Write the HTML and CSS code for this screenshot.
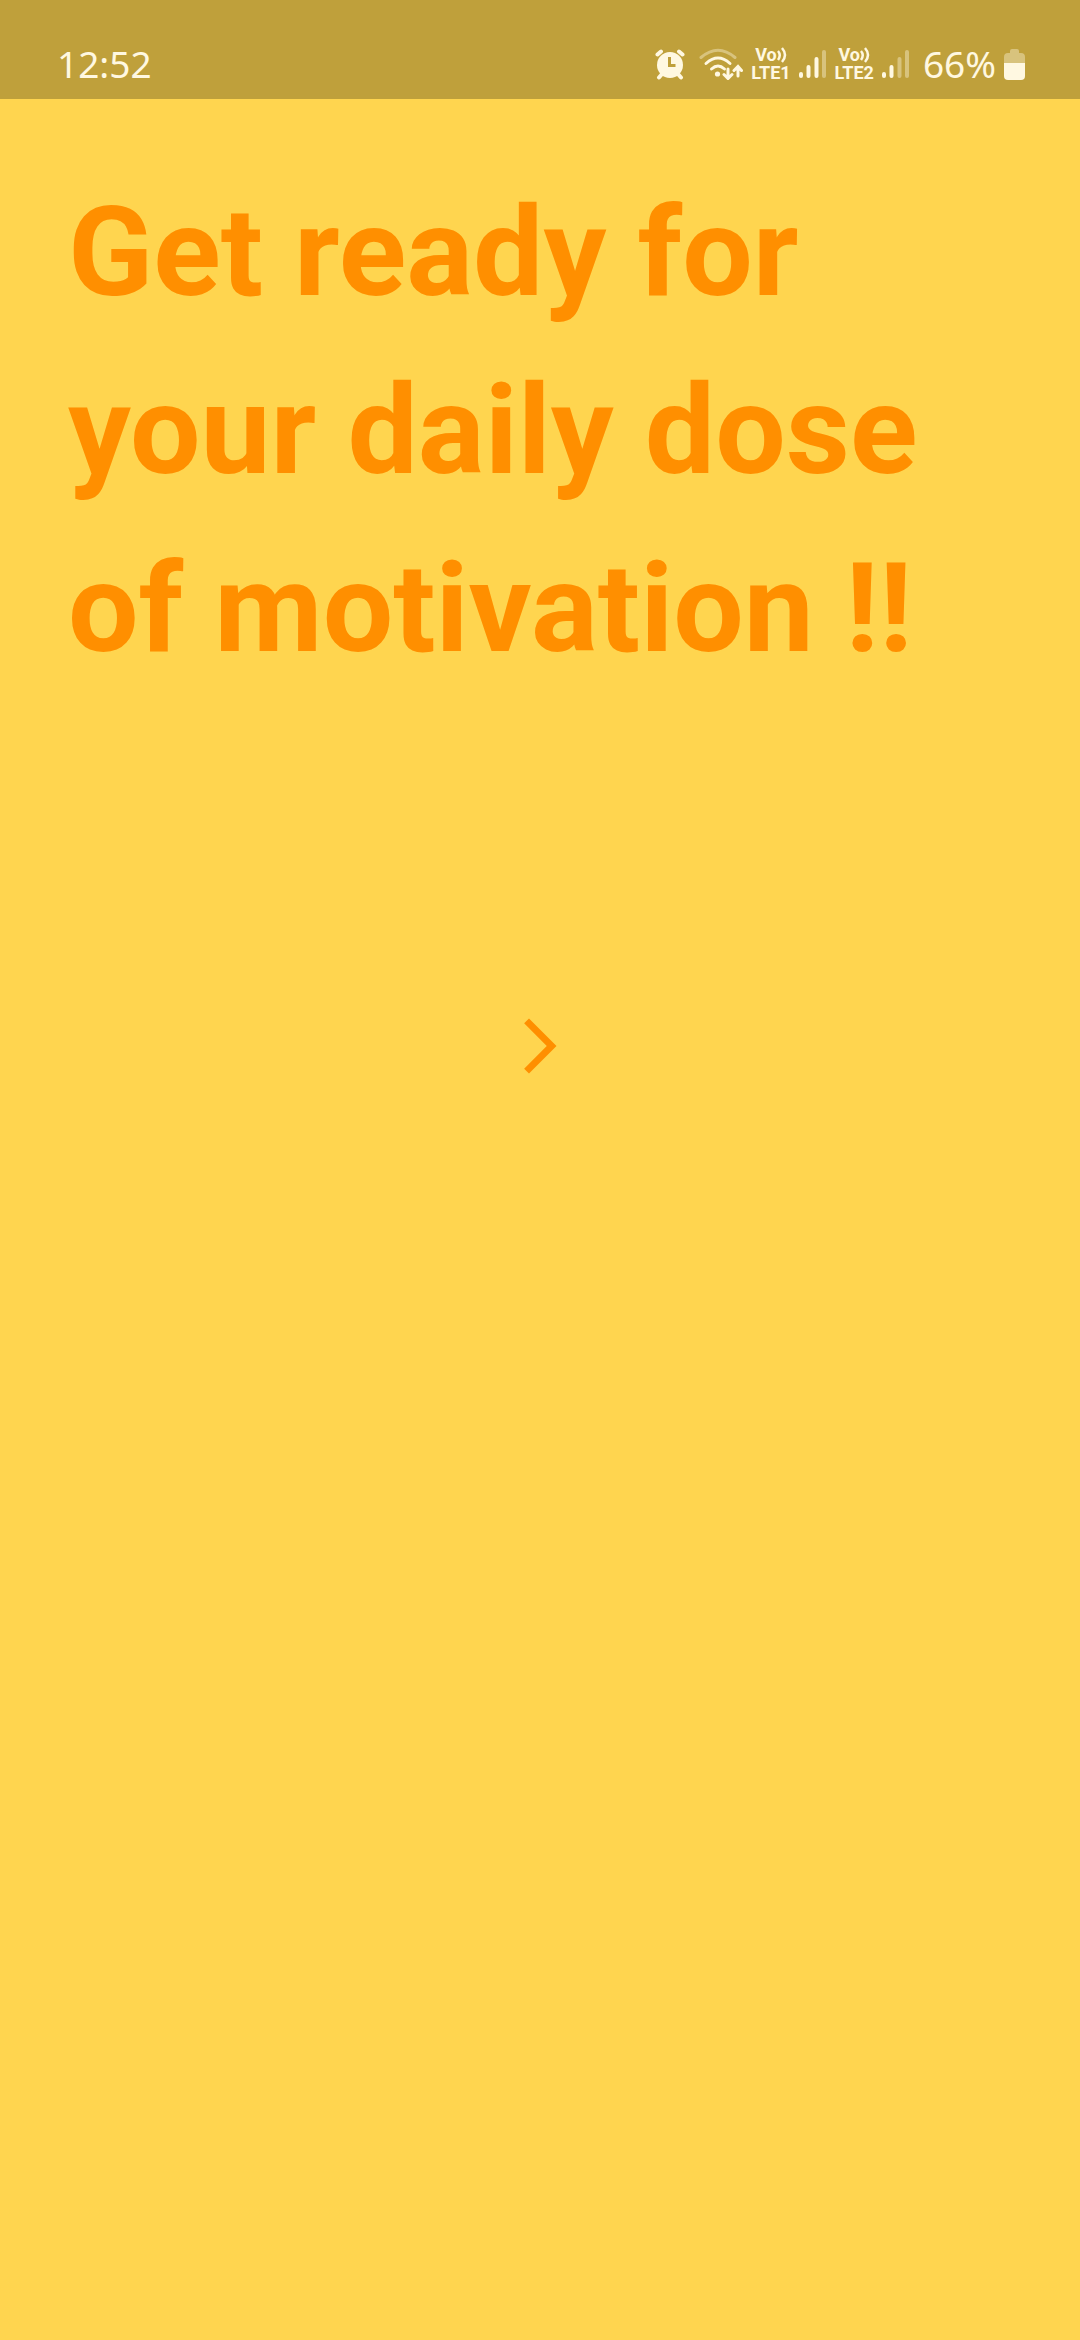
FILE: index.html
```html
<!DOCTYPE html>
<html lang="en">
<head>
<meta charset="utf-8">
<meta name="viewport" content="width=device-width, initial-scale=1">
<title>Daily motivation</title>
<link rel="stylesheet" href="styles.css">
</head>
<body>
<header class="status">
  <time class="clock">12:52</time>
  <div class="indicators">
    <svg class="alarm" width="30" height="32" viewBox="0 0 30 32" aria-label="Alarm">
      <g stroke="currentColor" stroke-width="4" stroke-linecap="round" fill="none">
        <path d="M2.5 6.5L6 3.5M27.5 6.5L24 3.5M7 26L4 29.500M23 26L26 29.500"/>
      </g>
      <circle cx="15" cy="17" r="13" fill="currentColor"/>
      <path class="hands" d="M14.500 9V17.500H20.500"/>
    </svg>
    <svg class="wifi" width="44" height="32" viewBox="0 0 44 32" aria-label="Wi-Fi">
      <g stroke="currentColor" stroke-width="3" stroke-linecap="round" fill="none">
        <path d="M2 9.500Q19 -5 36 9.500" opacity=".4"/>
        <path d="M7 15.500Q19 4.500 31 15.500"/>
        <path d="M12.500 21Q19 15 25.500 21"/>
        <path d="M29 21V30M25 26.500L29 30.500L33 26.500M39 28V18.500M35 22.500L39 18.500L42.500 22.500"/>
      </g>
      <circle cx="18.500" cy="26" r="2.600" fill="currentColor"/>
    </svg>
    <div class="volte"><span class="vo">Vo<svg width="10" height="18" viewBox="0 0 10 18" aria-hidden="true"><path d="M1 5Q4.500 9 1 14M5 2Q11 9 5 16" fill="none" stroke="currentColor" stroke-width="2.500"/></svg></span><span>LTE1</span></div>
    <svg class="signal" width="28" height="32" viewBox="0 0 28 32" aria-label="Signal 1">
      <g stroke="currentColor" stroke-width="4" stroke-linecap="round">
        <path d="M2 26V28M9.500 19V28M17.500 11V28"/><path d="M25 4V28" opacity=".4"/>
      </g>
    </svg>
    <div class="volte"><span class="vo">Vo<svg width="10" height="18" viewBox="0 0 10 18" aria-hidden="true"><path d="M1 5Q4.500 9 1 14M5 2Q11 9 5 16" fill="none" stroke="currentColor" stroke-width="2.500"/></svg></span><span>LTE2</span></div>
    <svg class="signal" width="28" height="32" viewBox="0 0 28 32" aria-label="Signal 2">
      <g stroke="currentColor" stroke-width="4" stroke-linecap="round">
        <path d="M2 26V28M9.500 19V28"/><path d="M17.500 11V28M25 4V28" opacity=".4"/>
      </g>
    </svg>
    <span class="percent">66%</span>
    <svg class="battery" width="21" height="32" viewBox="0 0 21 32" aria-label="Battery">
      <path d="M6 3Q6 1 8 1H13Q15 1 15 3V5H17Q21 5 21 9V15H0V9Q0 5 4 5H6Z" fill="currentColor" opacity=".4"/>
      <path d="M0 15H21V28Q21 32 17 32H4Q0 32 0 28Z" fill="currentColor"/>
    </svg>
  </div>
</header>
<main class="intro">
  <h1 class="headline">Get ready for your daily dose of motivation !!</h1>
  <button class="next" type="button" aria-label="Next">
    <svg width="66" height="66" viewBox="0 0 24 24" aria-hidden="true"><path d="M6.230 20.230L8 22L18 12L8 2L6.230 3.770L14.460 12Z" fill="currentColor"/></svg>
  </button>
</main>
</body>
</html>
```
FILE: styles.css
```css
* {
  box-sizing: border-box;
}

body {
  margin: 0;
  min-height: 100vh;
  background: #ffd54f;
  color: #ff8f00;
  font-family: Roboto, sans-serif;
}

svg {
  display: block;
  flex: none;
}

.status {
  display: flex;
  justify-content: space-between;
  align-items: center;
  padding: 30px 55px 2px 57px;
  height: 99px;
  background: #bfa03b;
  color: #fff8e1;
}

.clock,
.percent {
  font-family: "Noto Sans", sans-serif;
  font-size: 37px;
  line-height: 64px;
}

.indicators {
  display: flex;
  align-items: center;
  gap: 8px;
}

.alarm {
  margin-right: 6px;
}

.hands {
  fill: none;
  stroke: #bfa03b;
  stroke-width: 3px;
}

.volte {
  display: flex;
  flex-direction: column;
  align-items: center;
  font-size: 18px;
  font-weight: 700;
  line-height: 18px;
}

.vo {
  display: flex;
}

.percent {
  margin-left: 5px;
}

.intro {
  display: flex;
  flex-direction: column;
  align-items: center;
  padding: 65px 68px;
}

.headline {
  align-self: stretch;
  margin: 0;
  font-size: 125px;
  font-weight: 700;
  line-height: 178px;
}

.next {
  display: flex;
  align-items: center;
  justify-content: center;
  margin-top: 282px;
  padding: 33px;
  border: 0;
  background: none;
  color: inherit;
  cursor: pointer;
}
```
